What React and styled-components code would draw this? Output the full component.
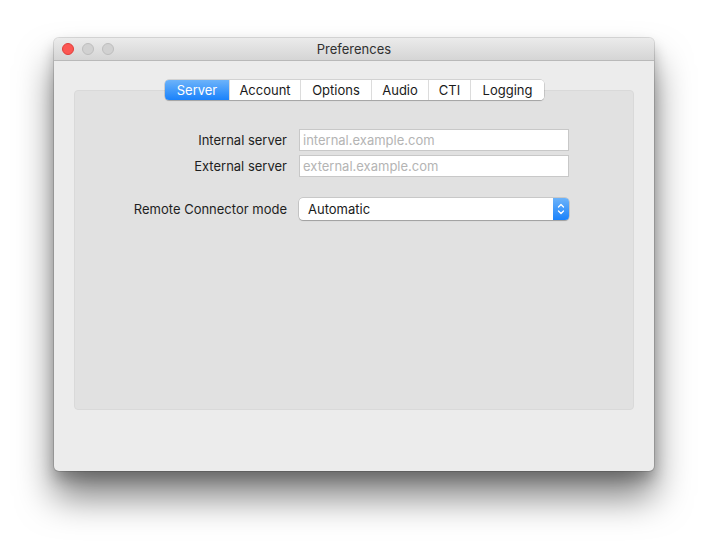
import React from 'react';
import styled, { createGlobalStyle } from 'styled-components';

const GlobalStyle = createGlobalStyle`
    html, body {
        margin: 0;
        padding: 0;
        background: #ffffff;
    }
    body {
        font-family: Inter, Roboto, "Liberation Sans", Arial, sans-serif;
        font-size: 13px;
        color: #1e1e1e;
    }
`

const Page = styled.div`
    width: 712px;
    height: 545px;
    padding: 38px 0 0 54px;
    box-sizing: border-box;
`

const Window = styled.div`
    width: 600px;
    height: 433px;
    display: flex;
    flex-direction: column;
    background-color: #ececec;
    border-radius: 5px;
    overflow: hidden;
    box-shadow: 0 0 0 1px rgba(0, 0, 0, 0.13), 0 26px 36px rgba(0, 0, 0, 0.5), 0 8px 14px rgba(0, 0, 0, 0.22);
`

const TitleBar = styled.div`
    position: relative;
    height: 22px;
    flex: none;
    display: flex;
    align-items: center;
    justify-content: center;
    background: linear-gradient(#ebebeb, #d5d5d5);
    border-bottom: 1px solid #b9b9b9;
    font-size: 13px;
    color: #303030;
`

const Lights = styled.div`
    position: absolute;
    left: 8px;
    top: 5px;
    display: flex;
    gap: 8px;
`

const Light = styled.span`
    width: 12px;
    height: 12px;
    border-radius: 50%;
    box-sizing: border-box;
    background: ${p => p.$red ? '#fc5753' : '#d1d1d1'};
    border: 1px solid ${p => p.$red ? '#df3e3a' : '#bdbdbd'};
`

const Body = styled.div`
    flex: 1;
    padding: 20px 20px 0 20px;
`

const TabFrame = styled.div`
    position: relative;
    height: 320px;
    margin-top: 9px;
    background-color: #e1e1e1;
    border: 1px solid #d9d9d9;
    border-radius: 4px;
    box-sizing: border-box;
`

const TabStrip = styled.div`
    position: absolute;
    top: -11px;
    left: 90px;
    display: flex;
    height: 20px;
    background: #ffffff;
    border-radius: 4px;
    box-shadow: 0 0 0 0.5px rgba(0, 0, 0, 0.22), 0 1px 1px rgba(0, 0, 0, 0.18);
    overflow: hidden;
`

const Tab = styled.div`
    width: ${p => p.$w}px;
    display: flex;
    align-items: center;
    justify-content: center;
    font-size: 13px;
    color: ${p => p.$active ? '#ffffff' : '#1a1a1a'};
    background: ${p => p.$active ? 'linear-gradient(#6cb3fa, #1a82fb)' : '#ffffff'};
    border-left: ${p => p.$first ? 'none' : '1px solid #dcdcdc'};
    box-sizing: border-box;
`

const Form = styled.div`
    display: grid;
    grid-template-columns: 212px 270px;
    column-gap: 12px;
    row-gap: 4px;
    padding-top: 38px;
    align-items: center;
`

const Label = styled.div`
    text-align: right;
    font-size: 13px;
    color: #1e1e1e;
    margin-top: ${p => p.$gap || 0}px;
`

const Input = styled.input`
    height: 22px;
    box-sizing: border-box;
    border: 1px solid #c8c8c8;
    background: #ffffff;
    padding: 0 3px;
    font-family: inherit;
    font-size: 13px;
    outline: none;
    &::placeholder {
        color: #b4b4b4;
    }
`

const Select = styled.div`
    margin-top: ${p => p.$gap || 0}px;
    height: 22px;
    display: flex;
    align-items: center;
    background: #ffffff;
    border-radius: 4px;
    box-shadow: 0 0 0 0.5px rgba(0, 0, 0, 0.22), 0 1px 1px rgba(0, 0, 0, 0.2);
    overflow: hidden;
`

const SelectText = styled.span`
    flex: 1;
    padding-left: 9px;
    font-size: 13px;
    color: #1a1a1a;
`

const SelectButton = styled.span`
    width: 16px;
    height: 100%;
    display: flex;
    align-items: center;
    justify-content: center;
    background: linear-gradient(#6cb3fa, #1a82fb);
`

const tabs = [
    { name: 'Server', w: 64 },
    { name: 'Account', w: 71 },
    { name: 'Options', w: 71 },
    { name: 'Audio', w: 57 },
    { name: 'CTI', w: 42 },
    { name: 'Logging', w: 74 },
];

const App = () => {
    return (
        <Page>
            <GlobalStyle />
            <Window>
                <TitleBar>
                    <Lights>
                        <Light $red />
                        <Light />
                        <Light />
                    </Lights>
                    Preferences
                </TitleBar>
                <Body>
                    <TabFrame>
                        <TabStrip>
                            {tabs.map((t, i) => (
                                <Tab key={t.name} $w={t.w} $active={i === 0} $first={i === 0}>{t.name}</Tab>
                            ))}
                        </TabStrip>
                        <Form>
                            <Label>Internal server</Label>
                            <Input placeholder="internal.example.com" />
                            <Label>External server</Label>
                            <Input placeholder="external.example.com" />
                            <Label $gap={17}>Remote Connector mode</Label>
                            <Select $gap={17}>
                                <SelectText>Automatic</SelectText>
                                <SelectButton>
                                    <svg width="8" height="14" viewBox="0 0 8 14" fill="none" stroke="#ffffff" strokeWidth="1.3" strokeLinecap="round" strokeLinejoin="round">
                                        <path d="M1.5 5 L4 2.5 L6.5 5" />
                                        <path d="M1.5 9 L4 11.5 L6.5 9" />
                                    </svg>
                                </SelectButton>
                            </Select>
                        </Form>
                    </TabFrame>
                </Body>
            </Window>
        </Page>
    );
};

export default App;
